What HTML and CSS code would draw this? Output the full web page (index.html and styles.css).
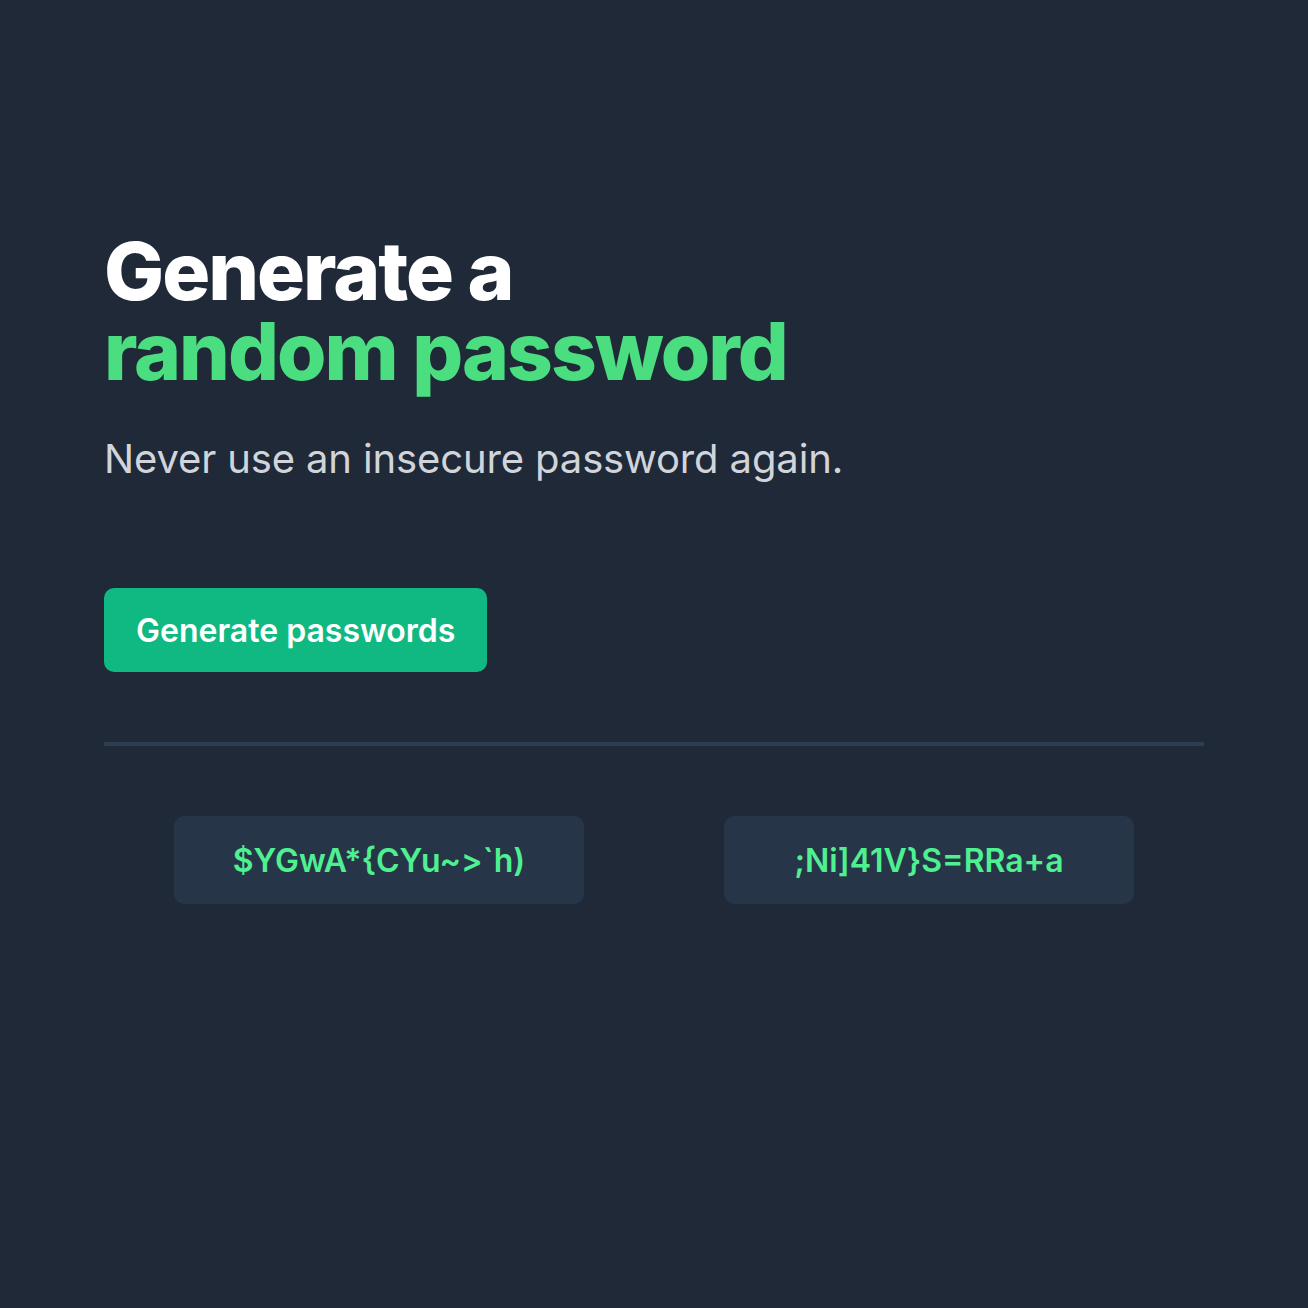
FILE: index.html
```html
<!DOCTYPE html>
<html lang="en">
<head>
<meta charset="utf-8">
<title>Password generator</title>
<link rel="stylesheet" href="styles.css">
</head>
<body>
<main class="page">
  <h1 class="title">Generate a<br><span class="accent">random password</span></h1>
  <p class="subtitle">Never use an insecure password again.</p>
  <button class="btn" type="button">Generate passwords</button>
  <hr class="divider">
  <div class="results">
    <div class="pw">$YGwA*{CYu~&gt;`h)</div>
    <div class="pw">;Ni]41V}S=RRa+a</div>
  </div>
</main>
</body>
</html>
```
FILE: styles.css
```css
html, body {
  margin: 0;
  padding: 0;
  background: #1f2937;
  font-family: Inter, "Noto Sans", sans-serif;
}
.page {
  width: 1100px;
  padding: 231px 0 0 104px;
  display: flex;
  flex-direction: column;
  align-items: flex-start;
}
.title {
  margin: 0;
  font-size: 80px;
  line-height: 80px;
  font-weight: 800;
  letter-spacing: -2px;
  color: #ffffff;
}
.accent {
  color: #4ade80;
}
.subtitle {
  margin: 40px 0 0;
  font-size: 40px;
  line-height: 56px;
  letter-spacing: -0.13px;
  color: #d1d5db;
}
.btn {
  margin-top: 101px;
  height: 84px;
  padding: 0 32px;
  border: none;
  border-radius: 10px;
  background: #10b981;
  color: #ffffff;
  font-family: Inter, "Noto Sans", sans-serif;
  font-size: 32px;
  font-weight: 600;
}
.divider {
  align-self: stretch;
  margin: 70px 0 0;
  border: none;
  height: 4px;
  background: #2f3d52;
}
.results {
  align-self: stretch;
  margin-top: 70px;
  display: flex;
  justify-content: space-around;
}
.pw {
  width: 410px;
  height: 88px;
  border-radius: 10px;
  background: #273549;
  color: #4ef090;
  font-size: 32px;
  font-weight: 600;
  display: flex;
  align-items: center;
  justify-content: center;
}
```
